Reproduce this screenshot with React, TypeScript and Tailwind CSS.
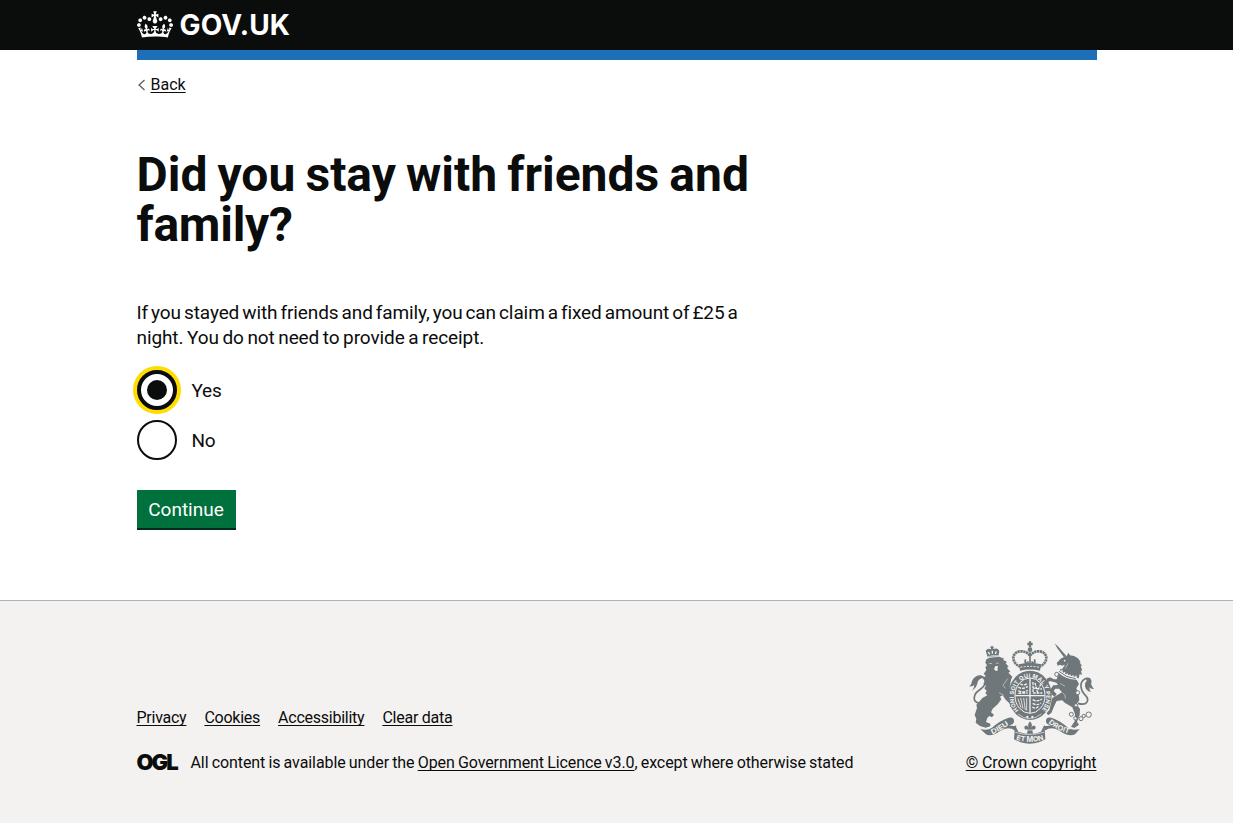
import type { ReactNode } from "react";

function CrownLogo() {
  return (
    <svg viewBox="0 0 132 97" className="-mt-0.5 h-[27px] w-9" fill="currentColor" aria-hidden="true">
      <path d="M25 30.2c3.5 1.5 7.7-.2 9.1-3.7 1.5-3.6-.2-7.8-3.9-9.2-3.6-1.4-7.6.3-9.1 3.9-1.4 3.5.3 7.5 3.9 9zM9 39.5c3.6 1.5 7.8-.2 9.2-3.7 1.5-3.6-.2-7.8-3.9-9.1-3.6-1.5-7.6.2-9.1 3.8-1.4 3.5.3 7.5 3.8 9zM4.4 57.2c3.5 1.5 7.7-.2 9.1-3.8 1.5-3.6-.2-7.7-3.9-9.1-3.5-1.5-7.6.3-9.1 3.8-1.4 3.5.3 7.6 3.9 9.1zm38.3-21.4c3.5 1.5 7.7-.2 9.1-3.8 1.5-3.6-.2-7.7-3.9-9.1-3.6-1.5-7.6.3-9.1 3.8-1.3 3.6.4 7.7 3.9 9.1zm64.4-5.6c-3.6 1.5-7.8-.2-9.1-3.7-1.5-3.6.2-7.8 3.8-9.2 3.6-1.4 7.7.3 9.2 3.9 1.3 3.5-.4 7.5-3.9 9zm15.9 9.3c-3.6 1.5-7.7-.2-9.1-3.7-1.5-3.6.2-7.8 3.7-9.1 3.6-1.5 7.7.2 9.2 3.8 1.5 3.5-.3 7.5-3.8 9zm4.7 17.7c-3.6 1.5-7.8-.2-9.2-3.8-1.5-3.6.2-7.7 3.9-9.1 3.6-1.5 7.7.3 9.2 3.8 1.3 3.5-.4 7.6-3.9 9.1zM89.3 35.8c-3.6 1.5-7.8-.2-9.2-3.8-1.4-3.6.2-7.7 3.9-9.1 3.6-1.5 7.7.3 9.2 3.8 1.4 3.6-.3 7.7-3.9 9.1zM69.7 17.7l8.9 4.7V9.3l-8.9 2.8c-.2-.3-.5-.6-.9-.9L72.4 0H59.6l3.500 11.2c-.3.3-.6.5-.9.9l-8.8-2.8v13.1l8.8-4.7c.3.3.6.7.9.9l-5 15.4v.1c-.2.8-.4 1.6-.4 2.4 0 4.1 3.1 7.5 7 8.1h.2c.3 0 .7.1 1 .1.4 0 .7 0 1-.1h.2c4-.6 7.1-4.1 7.1-8.1 0-.8-.1-1.7-.4-2.4V34l-5.1-15.4c.4-.2.7-.6 1-.9zM66 92.8c16.9 0 32.8 1.1 47.1 3.2 4-16.9 8.9-26.7 14-33.5l-9.6-3.4c1 4.9 1.1 7.2 0 10.2-1.5-1.4-3-4.3-4.2-8.7L108.6 76c2.8-2 5-3.2 7.5-3.3-4.4 9.4-10 11.9-13.6 11.2-4.3-.8-6.3-4.6-5.6-7.9 1-4.7 5.7-5.9 8-.5 4.3-8.7-3-11.4-7.6-8.8 7.1-7.2 7.9-13.5 2.1-21.1-8 6.1-8.1 12.3-4.5 20.8-4.7-5.4-12.1-2.5-9.5 6.2 3.4-5.2 7.9-2 7.2 3.1-.6 4.3-6.4 7.8-13.5 7.2-10.3-.9-10.9-8-11.2-13.8 2.5-.5 7.1 1.8 11 7.3L80.2 60c-4.1 4.4-8 5.3-12.3 5.4 1.4-4.4 8-11.6 8-11.6H55.5s6.4 7.2 7.9 11.6c-4.2-.1-8-1-12.3-5.4l1.4 16.4c3.9-5.5 8.5-7.7 10.9-7.3-.3 5.8-.9 12.8-11.1 13.8-7.2.6-12.9-2.9-13.5-7.2-.7-5 3.8-8.3 7.1-3.1 2.7-8.7-4.6-11.6-9.4-6.2 3.7-8.5 3.6-14.7-4.6-20.8-5.8 7.6-5 13.9 2.2 21.1-4.7-2.6-11.9.1-7.7 8.8 2.3-5.5 7.1-4.2 8.1.5.7 3.3-1.3 7.1-5.7 7.9-3.5.7-9-1.8-13.5-11.2 2.5.1 4.7 1.3 7.5 3.3l-4.7-15.4c-1.2 4.4-2.7 7.2-4.3 8.7-1.1-3-.9-5.3 0-10.2l-9.5 3.4c5 6.9 9.9 16.7 14 33.5 14.8-2.1 30.8-3.2 47.7-3.2z" />
    </svg>
  );
}

const PAPER = "#f3f2f1";
const INK = "#6f777b";

function RoyalArms() {
  return (
    <svg viewBox="27 17 375 309" className="h-[103px] w-[125px]" fill={INK} stroke="none" aria-hidden="true">
      {/* lion's crown */}
      <g>
        <path d="M83 66l-6-20q7-9 15-4l4-7 5 6q12-4 17 6l-3 16q-17-1-32 3z" />
        <path d="M96 31v10M91 36h10" stroke={INK} strokeWidth="4" />
        <path d="M85 50l4 7M97 46v9M109 48l-3 8" stroke={PAPER} strokeWidth="4" />
        <path d="M83 64q16-5 32-3" stroke={PAPER} strokeWidth="2" fill="none" />
      </g>
      {/* lion's tail */}
      <path d="M76 190C55 214 37 199 45 178C51 163 76 160 76 139C76 124 61 119 47 130" fill="none" stroke={INK} strokeWidth="5" />
      <path d="M64 120Q44 119 36 137Q34 150 27 153Q42 154 43 146Q43 159 36 166Q52 155 53 140Q57 130 69 127z" />
      {/* lion */}
      <path d="M79 72L88 67L118 64L133 70L129 73L141 80L137 84L146 94L141 97L151 109L145 112L157 124L153 134L149 154L155 162L164 169L162 183L150 177L153 190L165 207L161 217L149 214L153 208L137 193L128 180L120 184L124 192L113 207L98 220L93 231L102 238L96 246L88 242L82 248L78 260L91 265L91 273L77 277L60 272L47 262L49 251L44 239L51 218L49 208L59 198L67 188L82 180L76 174L80 167L73 159L78 151L70 145L75 137L69 130L77 121L71 116L79 104L76 96L81 90L76 82z" />
      <path d="M84 84l9-1 4 3M105 83l8-1 4 3M106 92l9 1-3 6 2 6-6 2-6-5z" fill={PAPER} />
      <path d="M143 130l-14 20 7 9M117 172l14 7" stroke={PAPER} strokeWidth="1.500" fill="none" />
      {/* centre crown */}
      <path d="M210 18v18M202 26h16" stroke={INK} strokeWidth="7" />
      <circle cx="210" cy="43" r="7" />
      <g fill="none" stroke={INK} strokeWidth="8" strokeDasharray="7 1.500">
        <path d="M182 94C153 85 153 50 181 48Q198 47 209 60" />
        <path d="M237 94C266 85 266 50 238 48Q222 47 211 60" />
      </g>
      <path d="M210 51v37M194 77q5 12 11 1M226 77q-5 12-11 1M196 72v12M224 72v12" stroke={INK} strokeWidth="5" fill="none" />
      <path d="M177 87q33-9 66 0l-3 19q-30-7-60 0z" />
      <path d="M181 96q29-6 58 0" stroke={PAPER} strokeWidth="3" strokeDasharray="6 4" fill="none" />
      {/* garter */}
      <ellipse cx="210" cy="180" rx="65" ry="74" />
      <ellipse cx="210" cy="181" rx="45" ry="53" fill={INK} stroke={PAPER} strokeWidth="3" />
      <path id="garter" d="M177 226A49 57 0 1 1 243 226" fill="none" />
      <text fill={PAPER} fontFamily="Inter, sans-serif" fontSize="17" fontWeight="700">
        <textPath href="#garter" startOffset="1" textLength="254" lengthAdjust="spacing">HONI SOIT QUI MAL Y PENSE</textPath>
      </text>
      {/* quartered shield */}
      <path d="M210 129v104M166 181h88" stroke={PAPER} strokeWidth="4" />
      <g fill="none" stroke={PAPER} strokeWidth="4">
        <path d="M175 155q12 9 28-2M175 166q14 8 28-1M181 145q10 8 22-1M175 174l28-1" strokeDasharray="9 3" />
        <path d="M219 140v33h28M225 143l7 26 10-22M219 158l27 3" strokeDasharray="8 3" />
        <path d="M174 190l9 27M182 188l7 32M191 188l5 36M200 188v38" strokeWidth="2.500" />
        <path d="M218 193q15 8 28-2M218 204q13 8 25-1M217 215q10 8 18-2" strokeDasharray="9 3" />
      </g>
      <path d="M174 236q34 28 70 0" fill="none" stroke={PAPER} strokeWidth="2" />
      <circle cx="202" cy="245" r="3.500" fill={PAPER} />
      <circle cx="217" cy="245" r="3.500" fill={PAPER} />
      {/* unicorn */}
      <path d="M284 24l11 10 24 28-7 4-20-27z" />
      {/* head and mane */}
      <path d="M312 65l9-4 4-9 5 8 12 2 12 7 8 11-3 1 7 11-4 1 5 12-4 1 3 13-7-3-3 13-34-8-17-18 10-15-10 3-4-3-8 3-3-8 12-13z" />
      <circle cx="314" cy="76" r="2.500" fill={PAPER} />
      <path d="M324 84l-8 15" stroke={PAPER} strokeWidth="1.500" />
      {/* coronet collar */}
      <path d="M298 105q22 20 52 22" fill="none" stroke={PAPER} strokeWidth="11" />
      <path d="M297 108q22 20 50 22" fill="none" stroke={INK} strokeWidth="3" />
      <path d="M301 102q20 17 49 20" fill="none" stroke={INK} strokeWidth="5" strokeDasharray="5 4" />
      {/* body and legs */}
      <path d="M296 113Q318 133 350 133L357 146L349 159L356 176L358 194L350 207L360 221L359 239L351 259L357 268L343 278L333 274L344 258L345 237L337 216L314 202L307 195L290 197L283 211L274 233L264 240L260 233L268 224L273 203L276 189L291 180L306 171L297 160L286 160L281 167L290 176L284 184L274 177L270 163L280 150L294 149L289 142L270 137L261 143L260 130L270 126L282 132L290 132z" />
      <path d="M308 172q10 7 8 18M301 144l14 9" fill="none" stroke={PAPER} strokeWidth="1.500" />
      {/* unicorn's tail */}
      <path d="M354 204C382 213 389 194 377 181C362 166 355 140 376 130Q394 125 392 143" fill="none" stroke={INK} strokeWidth="5" />
      <path d="M378 130q12-4 14 8 2 16 10 23-10 1-14-5 0 9 5 14-17-4-18-19-1-10 5-14z" />
      {/* chain */}
      <g fill={PAPER} stroke={INK} strokeWidth="3">
        <circle cx="290" cy="117" r="6" />
        <circle cx="353" cy="172" r="6" />
        <circle cx="348" cy="210" r="5" />
        <circle cx="334" cy="237" r="6" />
        <circle cx="346" cy="249" r="5" />
        <circle cx="363" cy="250" r="6" />
        <circle cx="371" cy="242" r="5" />
        <circle cx="386" cy="238" r="8" />
      </g>
      {/* motto ribbons */}
      <path d="M61 281Q82 287 96 277Q119 256 146 247Q163 244 162 259Q161 267 147 270Q158 274 169 271L166 286Q144 271 120 287Q93 306 78 297z" />
      <path d="M359 281Q338 287 324 277Q301 256 274 247Q257 244 258 259Q259 267 273 270Q262 274 251 271L254 286Q276 271 300 287Q327 306 345 297z" />
      <path d="M165 269l-3 43 20 9q28 9 57-1l17-8-3-43-10 20q-31 13-68 0z" />
      <path d="M166 291q42 13 86 0" fill="none" stroke={PAPER} strokeWidth="2" />
      <path id="dieu" d="M97 297Q125 286 153 263" fill="none" />
      <path id="mon" d="M168 313Q209 326 252 313" fill="none" />
      <path id="droit" d="M265 263Q293 287 335 297" fill="none" />
      <g fill={PAPER} fontFamily="Inter, sans-serif" fontSize="21" fontWeight="700">
        <text><textPath href="#dieu" textLength="58" lengthAdjust="spacingAndGlyphs">DIEU</textPath></text>
        <text><textPath href="#mon" textLength="85" lengthAdjust="spacingAndGlyphs">ET MON</textPath></text>
        <text><textPath href="#droit" textLength="70" lengthAdjust="spacingAndGlyphs">DROIT</textPath></text>
      </g>
      {/* fleur-de-lis */}
      <path d="M210 258q9 10 4 19 5-9 11-5 5 6-2 11-3-3-6 2l2 10h-18l2-10q-3-5-6-2-7-5-2-11 6-4 11 5-5-9 4-19z" />
      <path d="M202 284h16" stroke={PAPER} strokeWidth="2" />
    </svg>
  );
}

function FooterLink({ children }: { children: ReactNode }) {
  return (
    <a href="#" className="underline decoration-1 underline-offset-[2px] [text-decoration-skip-ink:none]">
      {children}
    </a>
  );
}

function RadioOption({ label, checked }: { label: string; checked?: boolean }) {
  return (
    <label className="flex h-10 items-center gap-[15px] text-[19px] tracking-[-0.2px]">
      {checked ? (
        <span className="flex size-10 items-center justify-center rounded-full border-4 border-[#0b0c0c] bg-white shadow-[0_0_0_4px_#ffdd00]">
          <span className="size-5 rounded-full bg-[#0b0c0c]" />
        </span>
      ) : (
        <span className="size-10 rounded-full border-2 border-[#0b0c0c] bg-white" />
      )}
      <span className="pt-0.5">{label}</span>
    </label>
  );
}

export default function App() {
  return (
    <div className="flex h-screen flex-col overflow-hidden bg-white font-['Roboto',sans-serif] text-[#0b0c0c]">
      <header className="h-[50px] shrink-0 bg-[#0b0c0c] text-white">
        <div className="mx-auto flex h-[50px] w-[960px] items-center gap-[7px]">
          <CrownLogo />
          <span className="font-['Inter',sans-serif] text-[28px] leading-none font-bold tracking-[0.15px]">GOV.UK</span>
        </div>
      </header>

      <div className="mx-auto flex h-[550px] w-[960px] shrink-0 flex-col items-start">
        <div className="h-2.5 w-full bg-[#1d70b8]" />
        <a href="#" className="mt-[15px] flex h-5 items-center gap-[5px] text-base leading-5">
          <svg viewBox="0 0 9 12" className="h-3 w-[9px]" fill="none" stroke="#505a5f" strokeWidth="1.2" aria-hidden="true">
            <path d="M7.5 1L2 6l5.500 5" />
          </svg>
          <span className="underline decoration-1 underline-offset-[2px]">Back</span>
        </a>

        <main className="mt-[55px] flex w-[630px] flex-col items-start">
          <h1 className="text-5xl leading-[50px] font-bold">
            <span className="[word-spacing:-1.8px]">Did you stay with friends and</span>
            <br />
            <span className="tracking-[-0.25px]">family?</span>
          </h1>
          <p className="mt-[50px] text-[19px] leading-[25px] tracking-[-0.1px]">
            <span className="[word-spacing:-1.6px]">
              If you stayed with friends and family, you can claim a fixed amount of £25 a
            </span>
            <br />
            <span className="[word-spacing:-1px]">night. You do not need to provide a receipt.</span>
          </p>
          <div className="mt-5 flex flex-col gap-2.5">
            <RadioOption label="Yes" checked />
            <RadioOption label="No" />
          </div>
          <button className="mt-[30px] h-[38px] w-[99px] bg-[#00703c] pt-px text-[19px] leading-none text-white shadow-[0_2px_0_#002d18]">
            Continue
          </button>
        </main>
      </div>

      <footer className="grow border-t border-[#b1b4b6] bg-[#f3f2f1] text-base leading-5">
        <div className="mx-auto flex w-[960px] items-end justify-between pt-10">
          <div className="flex flex-col gap-[25px]">
            <nav className="flex gap-[18px] tracking-[-0.25px]">
              <FooterLink>Privacy</FooterLink>
              <FooterLink>Cookies</FooterLink>
              <FooterLink>Accessibility</FooterLink>
              <FooterLink>Clear data</FooterLink>
            </nav>
            <div className="flex items-center">
              <span className="-mt-0.5 w-[54px] font-['Inter',sans-serif] text-[22px] leading-5 font-black tracking-[-2px]">OGL</span>
              <p className="tracking-[-0.08px] [word-spacing:-0.7px]">
                All content is available under the <FooterLink>Open Government Licence v3.0</FooterLink>, except where
                otherwise stated
              </p>
            </div>
          </div>
          <div className="flex flex-col items-center gap-[9px] tracking-[-0.1px]">
            <RoyalArms />
            <FooterLink>© Crown copyright</FooterLink>
          </div>
        </div>
      </footer>
    </div>
  );
}
